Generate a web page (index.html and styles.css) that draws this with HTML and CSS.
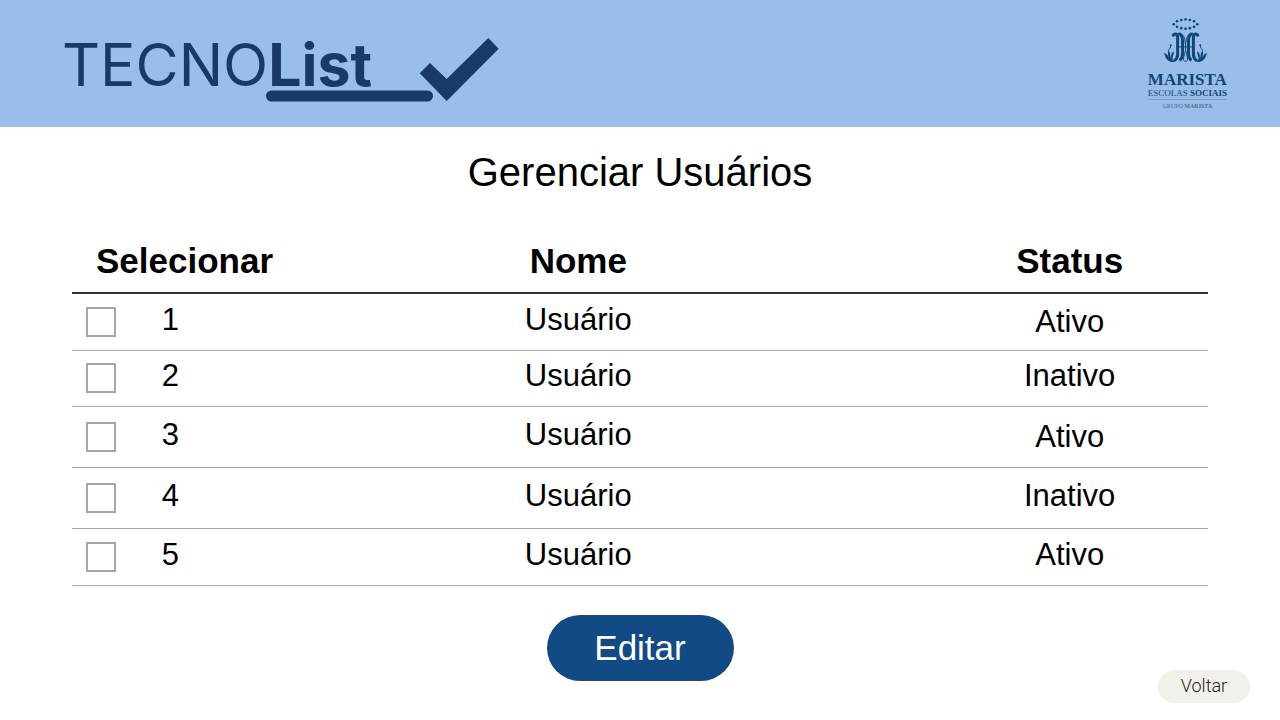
FILE: index.html
```html
<!DOCTYPE html>
<html lang="pt-BR">
<head>
<meta charset="utf-8">
<meta name="viewport" content="width=device-width, initial-scale=1">
<title>TecnoList - Gerenciar Usuários</title>
<link rel="stylesheet" href="styles.css">
</head>
<body>
<header class="topbar">
  <div class="brand">
    <span class="brand-name">TECNO<b>List</b></span>
    <svg class="brand-mark" viewBox="0 0 234 64" aria-hidden="true">
      <rect x="1" y="52.5" width="167" height="11" rx="5.5"/>
      <path d="M154.7 35.3 165 25l16.7 16L223.3 0l10.4 10.7L181.7 63z"/>
    </svg>
  </div>
  <div class="school">
    <svg class="school-emblem" viewBox="81 23 142 140" aria-hidden="true">
      <g class="stars">
        <circle cx="133" cy="29" r="4"/><circle cx="146" cy="27" r="4"/><circle cx="159" cy="29" r="4"/>
        <circle cx="120" cy="33" r="4"/><circle cx="172" cy="33" r="4"/>
        <circle cx="110" cy="42" r="4"/><circle cx="182" cy="42" r="4"/>
        <circle cx="120" cy="50" r="4"/><circle cx="172" cy="50" r="4"/>
        <circle cx="133" cy="54" r="4"/><circle cx="146" cy="56" r="4"/><circle cx="159" cy="54" r="4"/>
      </g>
      <g id="half">
        <path class="thick" d="M109 75C118 68 123 74 122 86V136Q121 148 111 153"/>
        <path class="thick" d="M124 73C131 68 137 80 137 92V134Q136 147 128 152"/>
        <path class="thin" d="M134 72C142 76 144 88 146 104M118 111H146"/>
        <circle cx="109" cy="75" r="5"/>
        <path class="leaf" d="M113 156C96 160 85 150 81 129C91 133 94 142 98 147C91 136 92 128 94 121C101 129 99 138 102 145C101 134 105 127 110 124C112 134 106 139 106 148Z"/>
        <path class="thin" d="M94 122C95 114 101 118 100 111L102 105"/>
        <circle cx="101" cy="106" r="3"/>
      </g>
      <use href="#half" transform="translate(292 0) scale(-1 1)"/>
      <path class="thin" d="M146 98V122C137 150 139 155 146 155S155 150 146 122"/>
    </svg>
    <span class="school-name">MARISTA</span>
    <span class="school-unit">ESCOLAS <b>SOCIAIS</b></span>
    <span class="school-group">GRUPO <b>MARISTA</b></span>
  </div>
</header>
<main class="content">
  <h1 class="title">Gerenciar Usuários</h1>
  <table class="users">
    <colgroup><col class="col-check"><col class="col-number"><col class="col-name"><col class="col-status"></colgroup>
    <thead>
      <tr><th class="select" colspan="2" scope="col">Selecionar</th><th class="name" scope="col">Nome</th><th class="status" scope="col">Status</th></tr>
    </thead>
    <tbody>
      <tr><td class="check"><input type="checkbox" id="u1"></td><td class="number"><label for="u1">1</label></td><td class="name">Usuário</td><td class="status low">Ativo</td></tr>
      <tr class="short"><td class="check"><input type="checkbox" id="u2"></td><td class="number"><label for="u2">2</label></td><td class="name">Usuário</td><td class="status">Inativo</td></tr>
      <tr class="tall"><td class="check"><input type="checkbox" id="u3"></td><td class="number"><label for="u3">3</label></td><td class="name">Usuário</td><td class="status low">Ativo</td></tr>
      <tr class="tall"><td class="check"><input type="checkbox" id="u4"></td><td class="number"><label for="u4">4</label></td><td class="name">Usuário</td><td class="status">Inativo</td></tr>
      <tr><td class="check"><input type="checkbox" id="u5"></td><td class="number"><label for="u5">5</label></td><td class="name">Usuário</td><td class="status">Ativo</td></tr>
    </tbody>
  </table>
</main>
<footer class="actions">
  <button class="edit" type="button">Editar</button>
  <button class="back" type="button">Voltar</button>
</footer>
</body>
</html>
```
FILE: styles.css
```css
* { box-sizing: border-box; }

body {
  margin: 0;
  background: #fff;
  color: #000;
  font-family: "Liberation Sans", Arial, sans-serif;
}

.topbar {
  display: flex;
  justify-content: space-between;
  align-items: flex-start;
  min-height: 127px;
  padding: 18px 53px 16px 62px;
  background: #99beea;
}

.brand {
  position: relative;
  padding-top: 11px;
  color: #193a66;
}

.brand-name {
  display: block;
  font: 400 59px/72px Inter, sans-serif;
}

.brand-name b { font-weight: 700; }

.brand-mark {
  position: absolute;
  left: 203px;
  top: 20px;
  width: 234px;
  height: 64px;
  fill: #193a66;
}

.school {
  display: flex;
  flex-direction: column;
  align-items: center;
  font-family: "Liberation Serif", serif;
  color: #124674;
  white-space: nowrap;
}

.school-emblem {
  width: 47px;
  height: 46px;
  fill: #124674;
}

.school-emblem .thick { fill: none; stroke: #124674; stroke-width: 9; }
.school-emblem .thin { fill: none; stroke: #124674; stroke-width: 3; }

.school-name {
  margin-top: 7px;
  font-size: 17px;
  line-height: 18px;
  font-weight: 700;
}

.school-unit {
  padding-bottom: 1px;
  border-bottom: 1px solid #7f9fc4;
  font-size: 9px;
  line-height: 9px;
}

.school-group {
  margin-top: 2px;
  font-size: 6px;
  line-height: 8px;
  color: #5b6b82;
}

.content { padding: 21px 72px 0; }

.title {
  margin: 0 0 33px;
  font-size: 40px;
  line-height: 48px;
  font-weight: 400;
  text-align: center;
}

.users {
  width: 100%;
  table-layout: fixed;
  border-collapse: collapse;
  text-align: center;
}

.col-check { width: 5%; }
.col-number { width: 15%; }
.col-name { width: 56%; }
.col-status { width: 24%; }

.users th {
  height: 64px;
  padding: 0;
  border-bottom: 2px solid #333;
  font-size: 35px;
  line-height: 40px;
}

.users td {
  height: 57px;
  padding: 0 0 4px;
  border-bottom: 1px solid #a6a6a6;
  font-size: 31px;
  line-height: 36px;
}

.users .short td { height: 56px; }
.users .tall td { height: 61px; }
.users .low { padding-bottom: 0; }
.users .select { padding-left: 24px; text-align: left; }
.users .name { padding-right: 78px; }
.users .status { padding-right: 4px; }
.users .number { padding-left: 33px; text-align: left; }
.users .check { padding: 0 0 0 14px; text-align: left; }

.check input {
  appearance: none;
  display: block;
  width: 30px;
  height: 30px;
  margin: 0;
  border: 2px solid #a6a6a6;
  background: #fff;
}

.check input:checked { background: #124a85; }

.actions {
  display: grid;
  grid-template-columns: 1fr auto 1fr;
  min-height: 88px;
  margin-top: 29px;
  padding: 0 30px;
}

.edit {
  grid-column: 2;
  align-self: start;
  width: 187px;
  height: 66px;
  border: 0;
  border-radius: 33px;
  background: #124a85;
  color: #fff;
  font: 35px/40px "Liberation Sans", Arial, sans-serif;
}

.back {
  align-self: end;
  justify-self: end;
  width: 92px;
  height: 33px;
  padding: 0;
  border: 0;
  border-radius: 17px;
  background: #f1f0eb;
  color: #222;
  font: 300 18px/24px Roboto, sans-serif;
}
```
